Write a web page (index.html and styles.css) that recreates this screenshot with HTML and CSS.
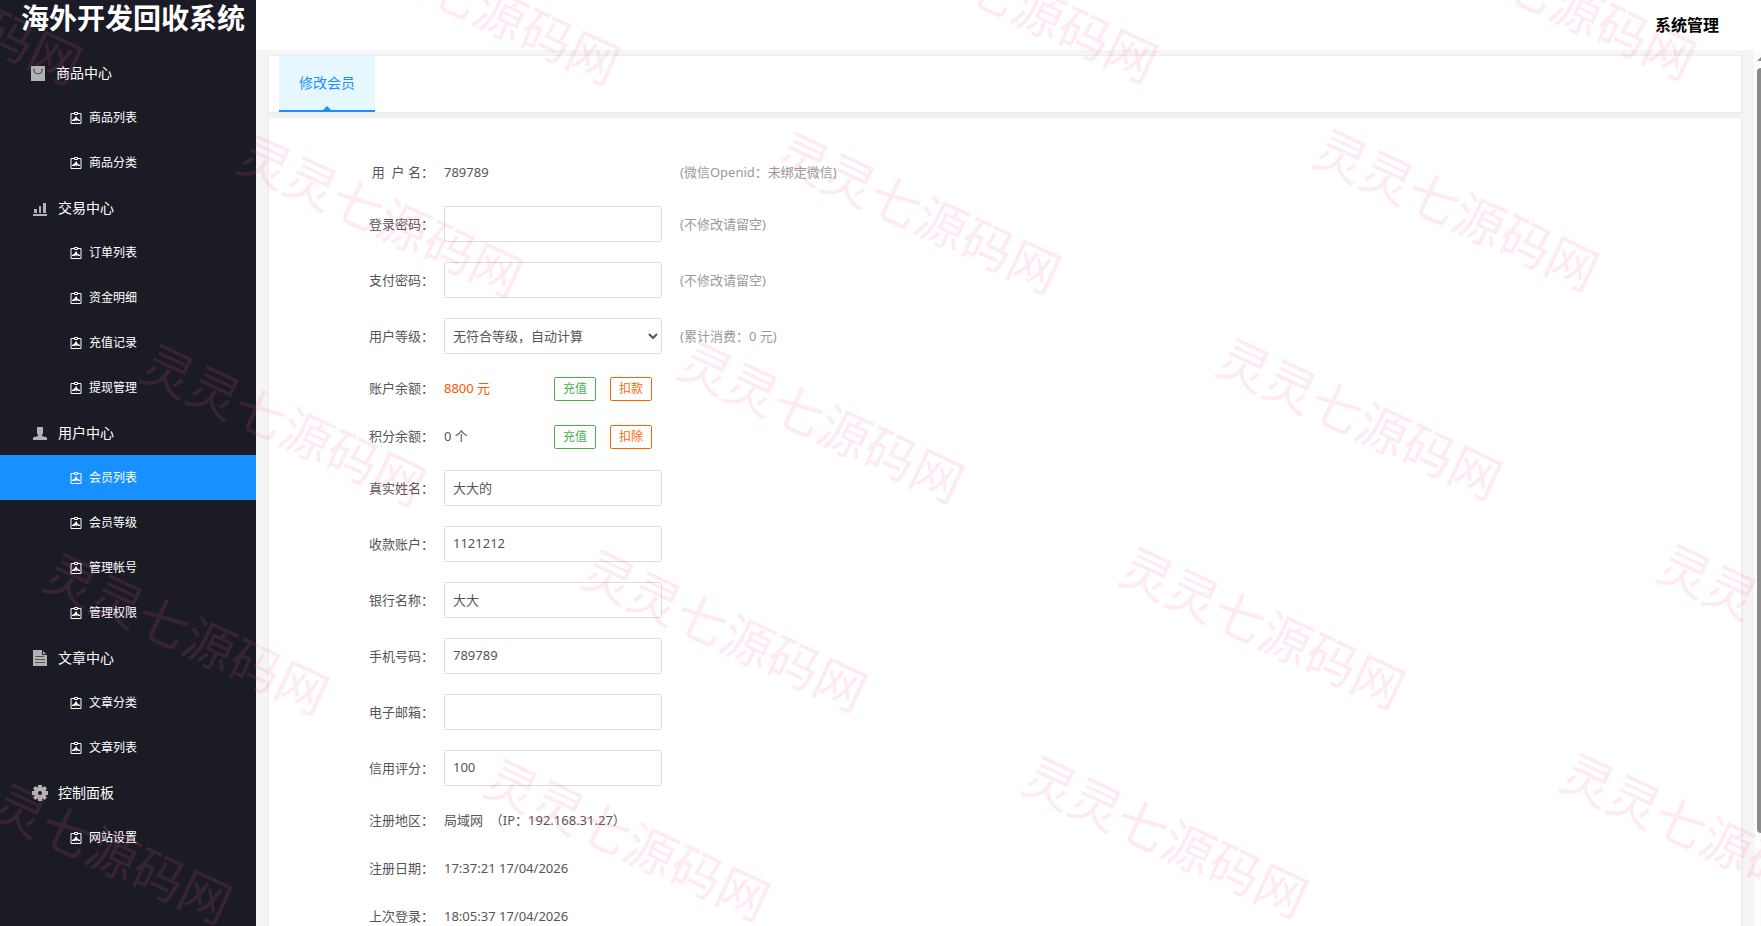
FILE: index.html
```html
<!DOCTYPE html>
<html lang="zh-CN">
<head>
  <meta charset="utf-8">
  <title>海外开发回收系统</title>
  <link rel="stylesheet" href="styles.css">
</head>
<body>
<svg class="sprite" aria-hidden="true">
  <symbol id="i-item" viewBox="0 0 12 12">
    <path d="M4 1.500H1v10h10v-10H8" fill="none" stroke="currentColor"/>
    <path d="M4.500 .5h3v2h-3z" fill="none" stroke="currentColor"/>
    <path d="M6 4l1 1v1l1 1 2 1v1H8.500L7 8v2L6 8l-1 1H2V8l2-1 .5-1h.5z" fill="currentColor"/>
  </symbol>
  <symbol id="i-goods" viewBox="0 0 16 16">
    <path d="M1 1h14v15H1z" fill="currentColor"/>
    <path d="M4 5c.5 5 7.500 5 8 0" fill="none" stroke="#555" stroke-width="1.200"/>
    <path d="M3 4.500h2M11 4.500h2" stroke="#555"/>
  </symbol>
  <symbol id="i-trade" viewBox="0 0 16 16">
    <path d="M1 14h14v2H1zM2 9h3v4H2zM7 6h2v7H7zM11 3h3v10h-3z" fill="currentColor"/>
  </symbol>
  <symbol id="i-user" viewBox="0 0 16 16">
    <path d="M5 2h6v6l-1 2v1l5 1.500V15H1v-2.500L6 11v-1L5 8z" fill="currentColor"/>
  </symbol>
  <symbol id="i-doc" viewBox="0 0 16 16">
    <path d="M1 0h9l5 5v11H1z" fill="currentColor"/>
    <path d="M10.500 0v4.500H15" fill="none" stroke="#1b1b25"/>
    <path d="M3 6.500h9M3 9.500h10M3 12.500h10" stroke="#555"/>
  </symbol>
  <symbol id="i-gear" viewBox="0 0 16 16">
    <path fill="currentColor" fill-rule="evenodd" d="M6 0h4v2l1 .5L12.500 1 15 3.500 13.500 5l.5 1h2v4h-2l-.5 1 1.500 1.500-2.500 2.500-1.500-1.500-1 .5v2H6v-2l-1-.5L3.500 15 1 12.500 2.500 11 2 10H0V6h2l.5-1L1 3.500 3.500 1 5 2.500 6 2zM8 6a2 2 0 1 0 0 4 2 2 0 0 0 0-4z"/>
  </symbol>
</svg>

<aside class="sidebar">
  <div class="logo">海外开发回收系统</div>
  <nav>
    <h3 class="group first"><svg><use href="#i-goods"/></svg>商品中心</h3>
    <a class="item" href="#"><svg><use href="#i-item"/></svg>商品列表</a>
    <a class="item" href="#"><svg><use href="#i-item"/></svg>商品分类</a>
    <h3 class="group"><svg><use href="#i-trade"/></svg>交易中心</h3>
    <a class="item" href="#"><svg><use href="#i-item"/></svg>订单列表</a>
    <a class="item" href="#"><svg><use href="#i-item"/></svg>资金明细</a>
    <a class="item" href="#"><svg><use href="#i-item"/></svg>充值记录</a>
    <a class="item" href="#"><svg><use href="#i-item"/></svg>提现管理</a>
    <h3 class="group"><svg><use href="#i-user"/></svg>用户中心</h3>
    <a class="item active" href="#"><svg><use href="#i-item"/></svg>会员列表</a>
    <a class="item" href="#"><svg><use href="#i-item"/></svg>会员等级</a>
    <a class="item" href="#"><svg><use href="#i-item"/></svg>管理帐号</a>
    <a class="item" href="#"><svg><use href="#i-item"/></svg>管理权限</a>
    <h3 class="group"><svg><use href="#i-doc"/></svg>文章中心</h3>
    <a class="item" href="#"><svg><use href="#i-item"/></svg>文章分类</a>
    <a class="item" href="#"><svg><use href="#i-item"/></svg>文章列表</a>
    <h3 class="group"><svg><use href="#i-gear"/></svg>控制面板</h3>
    <a class="item" href="#"><svg><use href="#i-item"/></svg>网站设置</a>
  </nav>
</aside>

<div class="main">
  <header class="top"><a href="#">系统管理</a></header>
  <div class="frame">
    <div class="content">
      <div class="card tabs">
        <a class="tab" href="#">修改会员</a>
      </div>
      <form class="card form">
        <div class="row text">
          <span class="label">用&nbsp;&nbsp;户&nbsp;名：</span>
          <span class="field">789789</span>
          <span class="hint">(微信Openid：未绑定微信)</span>
        </div>
        <div class="row">
          <label class="label" for="pwd">登录密码：</label>
          <input class="field" type="password" id="pwd">
          <span class="hint">(不修改请留空)</span>
        </div>
        <div class="row">
          <label class="label" for="paypwd">支付密码：</label>
          <input class="field" type="password" id="paypwd">
          <span class="hint">(不修改请留空)</span>
        </div>
        <div class="row">
          <label class="label" for="level">用户等级：</label>
          <select class="field" id="level">
            <option>无符合等级，自动计算</option>
          </select>
          <span class="hint">(累计消费：0 元)</span>
        </div>
        <div class="row text">
          <span class="label">账户余额：</span>
          <span class="amount money">8800 元</span>
          <button type="button" class="btn green">充值</button>
          <button type="button" class="btn orange">扣款</button>
        </div>
        <div class="row text">
          <span class="label">积分余额：</span>
          <span class="amount">0 个</span>
          <button type="button" class="btn green">充值</button>
          <button type="button" class="btn orange">扣除</button>
        </div>
        <div class="row">
          <label class="label" for="realname">真实姓名：</label>
          <input class="field" type="text" id="realname" value="大大的">
        </div>
        <div class="row">
          <label class="label" for="account">收款账户：</label>
          <input class="field" type="text" id="account" value="1121212">
        </div>
        <div class="row">
          <label class="label" for="bank">银行名称：</label>
          <input class="field" type="text" id="bank" value="大大">
        </div>
        <div class="row">
          <label class="label" for="mobile">手机号码：</label>
          <input class="field" type="text" id="mobile" value="789789">
        </div>
        <div class="row">
          <label class="label" for="email">电子邮箱：</label>
          <input class="field" type="text" id="email">
        </div>
        <div class="row">
          <label class="label" for="credit">信用评分：</label>
          <input class="field" type="text" id="credit" value="100">
        </div>
        <div class="row text">
          <span class="label">注册地区：</span>
          <span>局域网&nbsp;&nbsp;（IP：192.168.31.27）</span>
        </div>
        <div class="row text">
          <span class="label">注册日期：</span>
          <span>17:37:21 17/04/2026</span>
        </div>
        <div class="row text">
          <span class="label">上次登录：</span>
          <span>18:05:37 17/04/2026</span>
        </div>
      </form>
    </div>
    <div class="scrollbar"><i class="up"></i><i class="thumb"></i></div>
  </div>
</div>

<svg class="watermark" aria-hidden="true">
  <defs><text id="wm" text-anchor="middle" y="20" transform="rotate(25)">灵灵七源码网</text></defs>
  <use href="#wm" x="-60" y="3"/>
  <use href="#wm" x="478" y="3"/>
  <use href="#wm" x="1016" y="1"/>
  <use href="#wm" x="1554" y="-2"/>
  <use href="#wm" x="381" y="215"/>
  <use href="#wm" x="919" y="212"/>
  <use href="#wm" x="1457" y="209"/>
  <use href="#wm" x="284" y="424"/>
  <use href="#wm" x="822" y="421"/>
  <use href="#wm" x="1360" y="418"/>
  <use href="#wm" x="187" y="633"/>
  <use href="#wm" x="725" y="630"/>
  <use href="#wm" x="1263" y="627"/>
  <use href="#wm" x="1801" y="624"/>
  <use href="#wm" x="90" y="842"/>
  <use href="#wm" x="628" y="839"/>
  <use href="#wm" x="1166" y="836"/>
  <use href="#wm" x="1704" y="833"/>
</svg>
</body>
</html>
```
FILE: styles.css
```css
* {
  box-sizing: border-box;
}

body {
  margin: 0;
  display: flex;
  height: 100vh;
  overflow: hidden;
  font: 13px/20px "Noto Sans", "Noto Sans CJK SC", sans-serif;
  color: #555;
  background: #f5f5f5;
}

a {
  text-decoration: none;
  color: inherit;
}

.sprite {
  display: none;
}

/* sidebar */
.sidebar {
  flex: 0 0 256px;
  background: #1b1b25;
  color: #fff;
}

.logo {
  height: 50px;
  padding-left: 21px;
  font: bold 28px/34px "Noto Sans CJK SC", sans-serif;
  white-space: nowrap;
}

.group,
.item {
  display: flex;
  align-items: center;
  height: 45px;
  margin: 0;
}

.group {
  gap: 10px;
  padding-left: 32px;
  font-size: 14px;
  font-weight: normal;
}

.group.first {
  padding-left: 30px;
}

.group svg {
  width: 16px;
  height: 16px;
  color: #b2b2b2;
}

.item {
  gap: 7px;
  padding-left: 70px;
  font-size: 12px;
}

.item svg {
  width: 12px;
  height: 12px;
}

.item.active {
  background: #1890ff;
}

/* right side */
.main {
  flex: 1;
  display: flex;
  flex-direction: column;
  min-width: 0;
}

.top {
  flex: 0 0 50px;
  display: flex;
  align-items: center;
  justify-content: flex-end;
  padding-right: 42px;
  background: #fff;
  color: #000;
  font-size: 16px;
  font-weight: bold;
}

.frame {
  flex: 1;
  display: flex;
  min-height: 0;
}

.content {
  flex: 1;
  display: flex;
  flex-direction: column;
  gap: 4px;
  padding: 5px 12px 0;
  overflow: hidden;
}

.card {
  flex: none;
  background: #fff;
  border: 1px solid #eee;
  box-shadow: 0 1px 3px rgba(0, 0, 0, .05);
}

.tabs {
  display: flex;
  padding-left: 10px;
}

.tab {
  position: relative;
  height: 56px;
  padding: 0 20px;
  line-height: 54px;
  font-size: 14px;
  color: #1890ff;
  background: #e6f7ff;
  border-bottom: 2px solid #1890ff;
}

.tab::after {
  content: "";
  position: absolute;
  left: 44px;
  bottom: 0;
  border: 4px solid transparent;
  border-top: 0;
  border-bottom-color: #0a9fd6;
}

/* form */
.form {
  padding: 30px 0 30px 75px;
}

.row {
  display: flex;
  align-items: center;
  height: 56px;
}

.row.text {
  height: 48px;
}

.label {
  width: 90px;
  margin-right: 10px;
  text-align: right;
}

.field {
  width: 218px;
}

input.field,
select.field {
  height: 36px;
  padding: 0 8px;
  border: 1px solid #ddd;
  border-radius: 2px;
  background: #fff;
  font: inherit;
  color: #555;
}

input.field {
  padding-bottom: 2px;
}

select.field {
  padding: 0 4px;
}

.hint {
  margin-left: 18px;
  color: #999;
}

.amount {
  width: 110px;
}

.money {
  color: #ff5500;
}

.btn {
  width: 42px;
  height: 24px;
  margin: 2px 14px 0 0;
  padding: 0;
  border: 1px solid;
  border-radius: 2px;
  background: #fff;
  font: inherit;
  font-size: 12px;
}

.green {
  color: #4cae4c;
}

.orange {
  color: #ff6600;
}

.scrollbar {
  flex: 0 0 7px;
  display: flex;
  flex-direction: column;
  align-items: flex-end;
  gap: 7px;
  padding-top: 7px;
  overflow: hidden;
  background: #fcfcfc;
}

.up {
  border: 4px solid transparent;
  border-top: 0;
  border-right: 0;
  border-bottom-color: #8b8b8b;
}

.thumb {
  width: 4px;
  height: 88%;
  border-radius: 4px 0 0 4px;
  background: #8b8b8b;
}

/* watermark over the whole page */
.watermark {
  position: absolute;
  top: 0;
  left: 0;
  width: 100%;
  height: 100%;
  pointer-events: none;
  font: 51px "Noto Sans CJK SC", sans-serif;
  fill: rgba(255, 95, 169, .13);
}
```
